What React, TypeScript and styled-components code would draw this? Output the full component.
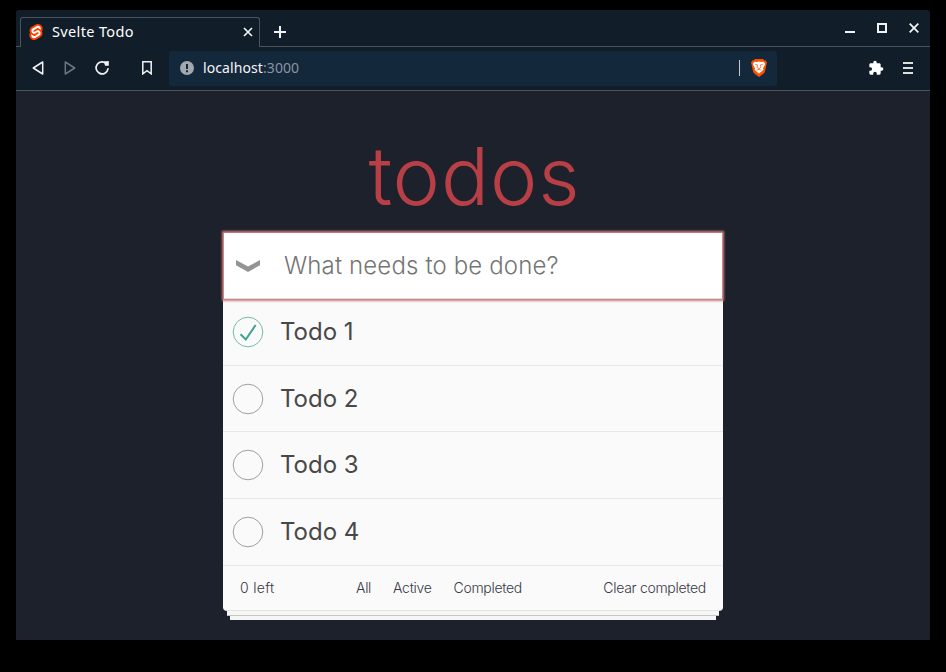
import React from 'react';
import styled, { createGlobalStyle } from 'styled-components';

const GlobalStyle = createGlobalStyle`
  * { box-sizing: border-box; }
  body { margin: 0; background: #000; overflow: hidden; }
  button, input { font: inherit; border: 0; padding: 0; margin: 0; background: none; }
`;

const Desktop = styled.div`
  width: 946px;
  height: 672px;
  padding: 10px 16px 32px;
  background: #000;
`;

const BrowserWindow = styled.div`
  display: flex;
  flex-direction: column;
  height: 630px;
  border-radius: 3px 3px 0 0;
  overflow: hidden;
  background: #111e2a;
  font-family: 'Noto Sans', sans-serif;
`;

const TabBar = styled.div`
  display: flex;
  align-items: flex-end;
  height: 37px;
`;

const TabEdge = styled.div<{ $grow?: boolean }>`
  display: flex;
  align-items: center;
  justify-content: space-between;
  height: 37px;
  width: ${p => (p.$grow ? 'auto' : '4px')};
  flex: ${p => (p.$grow ? '1' : 'none')};
  border-bottom: 1px solid #4b545e;
`;

const Tab = styled.div`
  display: flex;
  align-items: center;
  width: 240px;
  height: 30px;
  padding: 0 5px 1px 8px;
  border: 1px solid #4b545e;
  border-bottom: 0;
  border-radius: 3px 3px 0 0;
`;

const TabTitle = styled.span`
  flex: 1;
  margin: 0 0 2px 9px;
  color: #fff;
  font-size: 14.5px;
  font-weight: 450;
  line-height: 20px;
  letter-spacing: 0.36px;
`;

const IconButton = styled.button<{ $w?: number }>`
  display: flex;
  align-items: center;
  justify-content: center;
  width: ${p => p.$w ?? 16}px;
  height: 16px;
  color: #f1f2f3;
`;

const NewTab = styled(IconButton)`
  margin: 7px 0 0 12px;
`;

const WindowControls = styled.div`
  display: flex;
  gap: 16px;
  margin-right: 8px;
`;

const Toolbar = styled.div`
  display: flex;
  align-items: center;
  height: 44px;
  padding: 0 14px 1px;
  border-bottom: 1px solid #4b545e;
`;

const NavButtons = styled.div`
  display: flex;
  gap: 16px;
  width: 112px;
`;

const AddressBar = styled.div`
  display: flex;
  align-items: center;
  width: 608px;
  height: 35px;
  margin-left: 17px;
  padding: 0 10px;
  border-radius: 3px;
  background: #14283c;
`;

const Address = styled.span`
  flex: 1;
  margin-left: 8px;
  color: #f4f5f7;
  font-size: 14px;
  line-height: 20px;
  letter-spacing: 0.09px;
`;

const Port = styled.span`
  color: #8994a0;
`;

const AddressDivider = styled.span`
  width: 1px;
  height: 16px;
  margin-right: 11px;
  background: #c5c9ce;
`;

const ToolbarActions = styled.div`
  display: flex;
  gap: 16px;
  margin-left: auto;
`;

const Page = styled.main`
  display: flex;
  flex-direction: column;
  align-items: center;
  flex: 1;
  background: #1d212b;
  font-family: Inter, sans-serif;
`;

const Title = styled.h1`
  height: 99px;
  margin: 43px 0 0;
  padding-left: 3px;
  color: #b83f45;
  font-size: 80px;
  font-weight: 300;
  line-height: 84px;
  letter-spacing: 0.9px;
`;

const Card = styled.section`
  width: 500px;
  height: 377px;
  border-radius: 0 0 4px 4px;
  background: #fafafa;
  box-shadow:
    0 1px 0 #e4e4e4,
    0 9px 0 -4px #f6f6f6,
    0 10px 0 -4px #c5c5c5,
    0 17px 0 -7px #f6f6f6;
`;

const EntryBar = styled.div`
  display: flex;
  align-items: center;
  height: 66px;
  margin: 0 1px;
  padding-left: 11px;
  background: #fff;
  border-bottom: 1px solid #dedede;
  box-shadow: 0 0 2px 2px #cf7d7d;
`;

const Entry = styled.input`
  flex: 1;
  margin-left: 23px;
  color: #111;
  font-size: 24px;
  font-weight: 300;
  line-height: 32px;
  letter-spacing: 0.13px;
  outline: none;
  &::placeholder { color: #757575; opacity: 1; }
`;

const List = styled.ul`
  display: grid;
  grid-template-rows: 67px 66px 67px 67px;
  margin: 0;
  padding: 0;
  list-style: none;
`;

const Item = styled.li`
  display: flex;
  align-items: center;
  padding-left: 9px;
  border-bottom: 1px solid #e8e8e8;
`;

const ItemText = styled.label`
  margin-left: 16px;
  color: #484848;
  font-size: 24px;
  font-weight: 400;
  line-height: 30px;
`;

const Footer = styled.footer`
  display: grid;
  grid-template-columns: 116px 1fr auto;
  align-items: center;
  height: 43px;
  padding: 0 17px;
  color: #373946;
  font-size: 14px;
  font-weight: 300;
`;

const Count = styled.span`
  letter-spacing: 0.3px;
`;

const Filters = styled.nav`
  display: flex;
  gap: 22px;
`;

const FooterButton = styled.button`
  color: inherit;
  letter-spacing: -0.3px;
`;

const SvelteLogo = () => (
  <svg width="14" height="16" viewBox="0 0 98 118">
    <path fill="#ff3e00" d="M91.8 15.6C80.9-.1 59.2-4.7 43.6 5.2L16.1 22.8C8.6 27.5 3.4 35.2 1.9 43.9c-1.3 7.3-.2 14.8 3.3 21.3-2.4 3.6-4 7.6-4.7 11.8-1.6 8.9.5 18.1 5.7 25.4 11 15.7 32.6 20.3 48.2 10.4l27.5-17.5c7.5-4.7 12.7-12.4 14.2-21.1 1.3-7.3.2-14.8-3.3-21.3 2.4-3.6 4-7.6 4.7-11.8 1.7-9-.4-18.2-5.7-25.5" />
    <path fill="#fff" d="M40.9 103.9c-8.9 2.3-18.2-1.2-23.4-8.7-3.2-4.4-4.4-9.9-3.5-15.3.2-.9.4-1.7.6-2.6l.5-1.6 1.4 1c3.3 2.4 6.9 4.2 10.8 5.4l1 .3-.1 1c-.1 1.4.3 2.9 1.1 4.1 1.6 2.3 4.4 3.4 7.1 2.7.6-.2 1.2-.4 1.7-.7L65.5 72c1.4-.9 2.3-2.2 2.6-3.8.3-1.6-.1-3.3-1-4.6-1.6-2.3-4.4-3.3-7.1-2.6-.6.2-1.2.4-1.7.7l-10.5 6.7c-1.7 1.1-3.6 1.9-5.6 2.4-8.9 2.3-18.2-1.2-23.4-8.7-3.1-4.4-4.4-9.9-3.4-15.3.9-5.2 4.1-9.9 8.6-12.7l27.5-17.5c1.7-1.1 3.6-1.9 5.6-2.5 8.9-2.3 18.2 1.2 23.4 8.7 3.2 4.4 4.4 9.9 3.5 15.3-.2.9-.4 1.7-.7 2.6l-.5 1.6-1.4-1c-3.3-2.4-6.9-4.2-10.8-5.4l-1-.3.1-1c.1-1.4-.3-2.9-1.1-4.1-1.6-2.3-4.4-3.3-7.1-2.6-.6.2-1.2.4-1.7.7L32.4 46.1c-1.4.9-2.3 2.2-2.6 3.8s.1 3.3 1 4.6c1.6 2.3 4.4 3.3 7.1 2.6.6-.2 1.2-.4 1.7-.7l10.5-6.7c1.7-1.1 3.6-1.9 5.6-2.5 8.9-2.3 18.2 1.2 23.4 8.7 3.2 4.4 4.4 9.9 3.5 15.3-.9 5.2-4.1 9.9-8.6 12.7l-27.5 17.5c-1.7 1.1-3.6 1.9-5.6 2.5" />
  </svg>
);

const BraveLogo = () => (
  <svg width="16" height="18" viewBox="0 0 16 18">
    <path fill="#fb5200" d="M4 0h8l1.4 1.4 1-.2L16 3.4l-.5 2L14 12.2c-.5 1.7-1.6 2.6-3 3.6l-3 2.2-3-2.2c-1.4-1-2.5-1.9-3-3.6L.5 5.4 0 3.4l1.6-2.2 1 .2z" />
    <path fill="#fff" d="m3.4 2.7 2.5.4L8 2.6l2.1.5 2.5-.4 1.5 2-.3 1.4-1.8 3.1.4 1.6-1.9 1.8L8 14.4l-2.5-1.8-1.9-1.8L4 9.2 2.2 6.1l-.3-1.4z" />
    <path fill="none" stroke="#fb5200" strokeWidth=".7" d="m4.2 5.4 2.300.4-.4 2.600L8 9.600l1.900-1.200-.4-2.600 2.300-.4M5.600 11.200l2.400-1 2.400 1M8 9.600v1" />
  </svg>
);

const Circle = ({ checked }: { checked: boolean }) => (
  <svg width="32" height="32" viewBox="0 0 32 32" fill="none">
    <circle cx="16" cy="16" r="14.8" stroke={checked ? '#63b49f' : '#949494'} strokeWidth=".9" />
    {checked && <path d="m8.500 18.300 5.300 5.200 9.800-14.500" stroke="#3ea390" strokeWidth="2" />}
  </svg>
);

const todos = [
  { text: 'Todo 1', done: true },
  { text: 'Todo 2', done: false },
  { text: 'Todo 3', done: false },
  { text: 'Todo 4', done: false },
];

export default function App() {
  return (
    <Desktop>
      <GlobalStyle />
      <BrowserWindow>
        <TabBar>
          <TabEdge />
          <Tab>
            <SvelteLogo />
            <TabTitle>Svelte Todo</TabTitle>
            <IconButton $w={12} aria-label="Close tab">
              <svg width="10" height="10" viewBox="0 0 10 10" stroke="currentColor" strokeWidth="1.7"><path d="m1 1 8 8M9 1 1 9" /></svg>
            </IconButton>
          </Tab>
          <TabEdge $grow>
            <NewTab aria-label="New tab">
              <svg width="12" height="12" viewBox="0 0 12 12" stroke="currentColor" strokeWidth="2"><path d="M6 0v12M0 6h12" /></svg>
            </NewTab>
            <WindowControls>
              <IconButton aria-label="Minimize">
                <svg width="12" height="12" viewBox="0 0 12 12"><path fill="currentColor" d="M1 9h10v2H1z" /></svg>
              </IconButton>
              <IconButton aria-label="Maximize">
                <svg width="10" height="10" viewBox="0 0 10 10" fill="none" stroke="currentColor" strokeWidth="2"><path d="M1 1h8v8H1z" /></svg>
              </IconButton>
              <IconButton aria-label="Close">
                <svg width="10" height="10" viewBox="0 0 10 10" stroke="currentColor" strokeWidth="1.8"><path d="m.7.7 8.6 8.6M9.3.7.7 9.3" /></svg>
              </IconButton>
            </WindowControls>
          </TabEdge>
        </TabBar>
        <Toolbar>
          <NavButtons>
            <IconButton aria-label="Back">
              <svg width="16" height="16" viewBox="0 0 16 16" fill="none" stroke="currentColor" strokeWidth="1.5" strokeLinejoin="round"><path d="M12.7 2v12L3.3 8z" /></svg>
            </IconButton>
            <IconButton aria-label="Forward">
              <svg width="16" height="16" viewBox="0 0 16 16" fill="none" stroke="#6c757e" strokeWidth="1.5" strokeLinejoin="round"><path d="M3.3 2v12l9.4-6z" /></svg>
            </IconButton>
            <IconButton aria-label="Reload">
              <svg width="16" height="16" viewBox="0 0 16 16"><path fill="none" stroke="currentColor" strokeWidth="1.7" strokeLinecap="round" d="M12.7 4A6 6 0 1 0 14 8.9" /><path fill="currentColor" d="M10 1.5 14.8 1v4.8H11z" /></svg>
            </IconButton>
          </NavButtons>
          <IconButton $w={10} aria-label="Bookmark">
            <svg width="10" height="14" viewBox="0 0 10 14" fill="none" stroke="currentColor" strokeWidth="1.5"><path d="M.8.8h8.4v12L5 9.6.8 12.8z" /></svg>
          </IconButton>
          <AddressBar>
            <svg width="16" height="16" viewBox="0 0 16 16"><circle cx="8" cy="8" r="7" fill="#a2a8af" /><path fill="#14283c" d="M7 4h2v5H7zM7 10.3h2v2H7z" /></svg>
            <Address>localhost<Port>:3000</Port></Address>
            <AddressDivider />
            <BraveLogo />
          </AddressBar>
          <ToolbarActions>
            <IconButton aria-label="Extensions">
              <svg width="16" height="16" viewBox="0 0 24 24"><path fill="#fff" d="M20.5 11H19V7c0-1.1-.9-2-2-2h-4V3.500a2.500 2.500 0 0 0-5 0V5H4c-1.100 0-2 .9-2 2v3.800h1.500a2.700 2.700 0 0 1 0 5.400H2V20c0 1.100.9 2 2 2h3.800v-1.500a2.700 2.700 0 0 1 5.400 0V22H17c1.100 0 2-.9 2-2v-4h1.500a2.500 2.500 0 0 0 0-5z" /></svg>
            </IconButton>
            <IconButton aria-label="Menu">
              <svg width="10" height="12" viewBox="0 0 10 12"><path fill="#dcdedf" d="M0 0h10v2H0zM0 5h10v2H0zM0 10h10v2H0z" /></svg>
            </IconButton>
          </ToolbarActions>
        </Toolbar>
        <Page>
          <Title>todos</Title>
          <Card>
            <EntryBar>
              <svg width="26" height="14" viewBox="0 0 26 14"><path fill="#949494" d="M1 1 13 7.500 25 1v5.200L13 13 1 6.200z" /></svg>
              <Entry placeholder="What needs to be done?" />
            </EntryBar>
            <List>
              {todos.map(todo => (
                <Item key={todo.text}>
                  <Circle checked={todo.done} />
                  <ItemText>{todo.text}</ItemText>
                </Item>
              ))}
            </List>
            <Footer>
              <Count>0 left</Count>
              <Filters>
                <FooterButton>All</FooterButton>
                <FooterButton>Active</FooterButton>
                <FooterButton>Completed</FooterButton>
              </Filters>
              <FooterButton>Clear completed</FooterButton>
            </Footer>
          </Card>
        </Page>
      </BrowserWindow>
    </Desktop>
  );
}
